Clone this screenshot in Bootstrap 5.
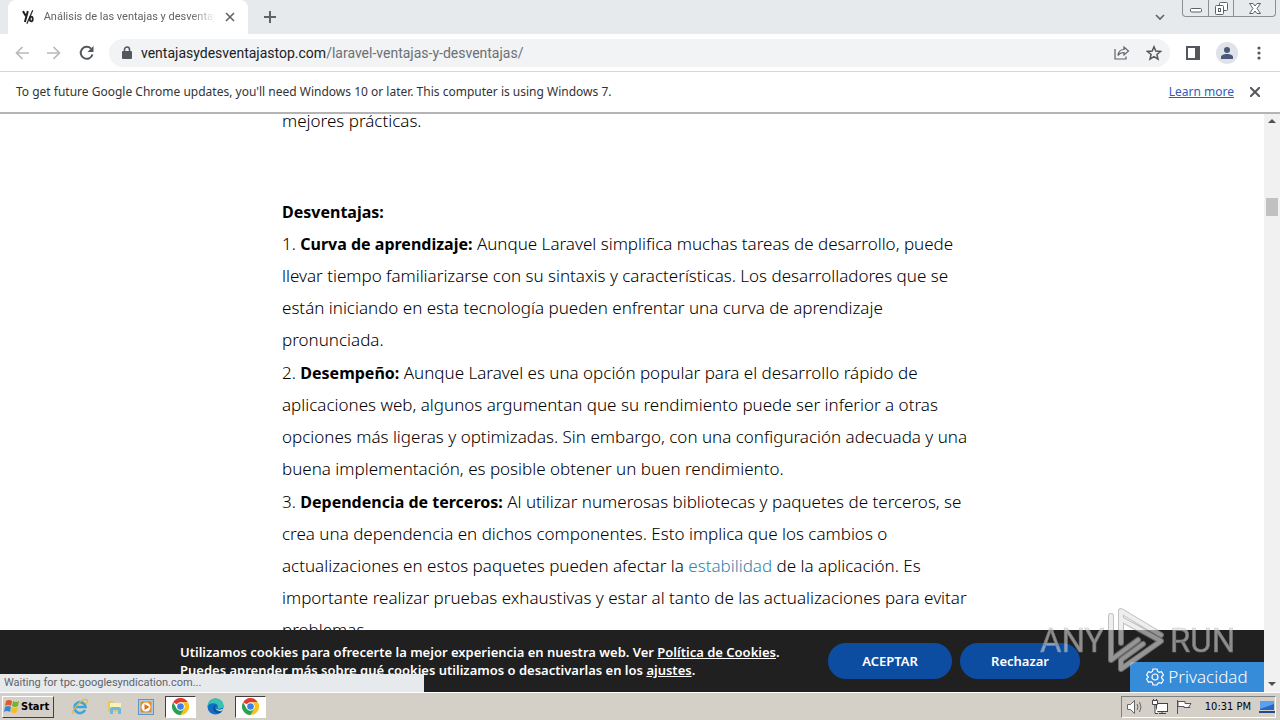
<!DOCTYPE html>
<html lang="es">
<head>
<meta charset="utf-8">
<meta name="viewport" content="width=device-width, initial-scale=1">
<title>Análisis de las ventajas y desventajas</title>
<link href="https://cdn.jsdelivr.net/npm/bootstrap@5.3.0/dist/css/bootstrap.min.css" rel="stylesheet">
<style>
  body { font-family: "DejaVu Sans Condensed", "DejaVu Sans", sans-serif; font-size: 12px; line-height: 16px; color: #333; background: #fff; }
  button, input { font: inherit; color: inherit; }
  .plain { border: 0; background: none; padding: 0; display: flex; }
  .strip { background: #e7eaed; height: 34px; }
  .tab { background: #fff; width: 240px; height: 34px; border-radius: 8px 8px 0 0; margin-left: 8px; font-family: Roboto, sans-serif; font-size: 11px; color: #5f6368; }
  .tab-title { overflow: hidden; width: 176px; -webkit-mask-image: linear-gradient(90deg, #000 85%, transparent); mask-image: linear-gradient(90deg, #000 85%, transparent); }
  .wincontrols { height: 17px; border: 1px solid #8b8f94; border-top: 0; border-radius: 0 0 4px 4px; margin-right: 4px; }
  .wincontrols button { justify-content: center; align-items: center; width: 25px; }
  .wincontrols button + button { border-left: 1px solid #8b8f94; }
  .wincontrols button:last-child { width: 42px; }
  .toolbar { height: 38px; border-bottom: 1px solid #d5d8db; padding-left: 15px; }
  .forward { margin: 0 18px; }
  .omnibox { background: #f1f3f4; height: 28px; border-radius: 14px; font-family: Roboto, sans-serif; font-size: 14px; margin-left: 14px; }
  .address { color: #202124; }
  .address span { color: #6b6f74; }
  .avatar { width: 22px; height: 22px; background: #dfe3e9; }
  .infobar { height: 42px; border-bottom: 2px solid #b4b4b4; font-family: "Noto Sans", sans-serif; }
  .infobar a { color: #2f5fb8; }
  .article { max-width: 700px; margin-top: -9px; font-family: "Noto Sans", sans-serif; font-weight: 300; font-size: 17px; line-height: 32px; color: #000; white-space: nowrap; }
  .article p { margin: 0 0 1px; }
  .article .lead-out { margin-bottom: 59px; }
  .article .heading { margin: 0; }
  .article b { font-weight: 700; font-size: 16px; }
  .article a { color: #2f83ad; text-decoration: none; }
  .scroller { width: 16px; background: #f1f1f1; }
  .thumb { height: 18px; width: 12px; background: #c1c1c1; margin-top: 74px; }
  .cookies { background: #202020; height: 62px; color: #fff; font-family: "Noto Sans", sans-serif; font-weight: 600; font-size: 13px; line-height: 18px; }
  .cookies-inner { max-width: 904px; }
  .cookies a { color: #fff; }
  .pill { background: #0c4da2; color: #fff; height: 36px; border: 0; border-radius: 18px; font-weight: 600; }
  .accept { width: 124px; }
  .reject { width: 120px; }
  .privacy { background: #368cd9; color: #fff; width: 134px; height: 30px; font-family: "Noto Sans", sans-serif; font-weight: 300; font-size: 17px; border-radius: 3px 0 0 0; }
  .status { background: #e7eaed; color: #5f6368; width: 424px; height: 18px; font-family: Roboto, sans-serif; font-size: 11px; }
  .watermark { right: 32px; bottom: 18px; pointer-events: none; opacity: .6; }
  .taskbar { height: 28px; background: #d4d0c8; border-top: 1px solid #fff; color: #000; font-size: 11px; }
  .raised { background: #d4d0c8; border: 1px solid; border-color: #fff #404040 #404040 #fff; height: 22px; width: 52px; font-weight: 700; margin: 0 10px 0 2px; }
  .task { width: 31px; height: 22px; justify-content: center; align-items: center; }
  .task.open { background: #fff; border: 1px solid; border-color: #404040 #fff #fff #404040; }
  .tray { border: 1px solid; border-color: #808080 #fff #fff #808080; height: 22px; }
</style>
</head>
<body class="vh-100 d-flex flex-column overflow-hidden">
<header>
  <div class="strip d-flex">
    <div class="tab d-flex align-items-center px-2">
      <svg class="ms-1 me-2" width="16" height="16" viewBox="0 0 16 16" fill="none" stroke="#222"><path d="M3 2l3 5M8 2L5 13" stroke-width="2"/><path d="M13 1L7 15" stroke-width="1.2"/><ellipse cx="11.500" cy="10" rx="1.500" ry="2.500" stroke-width="1.800"/></svg>
      <div class="tab-title text-nowrap">Análisis de las ventajas y desventajas</div>
      <button class="plain mx-1 ps-1" aria-label="Cerrar pestaña"><svg width="12" height="12" viewBox="0 0 12 12" stroke="#5f6368" stroke-width="1.6"><path d="M2 2l8 8M10 2l-8 8"/></svg></button>
    </div>
    <button class="plain align-items-center ms-3" aria-label="Nueva pestaña"><svg width="12" height="12" viewBox="0 0 12 12" stroke="#5f6368" stroke-width="2"><path d="M6 0v12M0 6h12"/></svg></button>
    <button class="plain align-items-center ms-auto me-3" aria-label="Buscar pestañas"><svg width="12" height="8" viewBox="0 0 12 8" fill="none" stroke="#5f6368" stroke-width="1.600"><path d="M2 2l4 4 4-4"/></svg></button>
    <div class="wincontrols d-flex">
      <button class="plain" aria-label="Minimizar"><svg class="mt-1" width="12" height="6" viewBox="0 0 12 6" fill="#fff" stroke="#5d6166"><rect x=".5" y="1.500" width="11" height="3.500" rx="1"/></svg></button>
      <button class="plain" aria-label="Restaurar"><svg width="13" height="13" viewBox="0 0 13 13" fill="#fff" stroke="#5d6166"><rect x="4.500" y=".5" width="8" height="8" rx="1"/><rect x=".5" y="3.500" width="8" height="9" rx="1"/><rect x="3.500" y="6.500" width="2" height="3"/></svg></button>
      <button class="plain" aria-label="Cerrar"><svg width="12" height="11" viewBox="0 0 12 11" fill="#fff" stroke="#5d6166"><path d="M.5.500h3.500l2 2.500 2-2.500h3.500l-3.500 5 3.500 5H8L6 8l-2 2.500H.5l3.500-5z"/></svg></button>
    </div>
  </div>
  <div class="toolbar d-flex align-items-center">
    <button class="plain" aria-label="Atrás"><svg width="14" height="14" viewBox="0 0 14 14" fill="none" stroke="#b7babd" stroke-width="1.700"><path d="M14 7H1.500M7.500 1l-6 6 6 6"/></svg></button>
    <button class="plain forward" aria-label="Adelante"><svg width="14" height="14" viewBox="0 0 14 14" fill="none" stroke="#b7babd" stroke-width="1.700"><path d="M0 7h12.500M6.500 1l6 6-6 6"/></svg></button>
    <button class="plain" aria-label="Recargar"><svg width="16" height="16" viewBox="0 0 16 16" fill="none" stroke="#54585c" stroke-width="2"><path d="M13.500 9.500A6 6 0 1 1 12 3.600"/><path d="M14.500 1v6h-6z" fill="#54585c" stroke="none"/></svg></button>
    <div class="omnibox d-flex align-items-center flex-grow-1 ps-2 pe-2">
      <svg class="ms-1 me-2" width="12" height="14" viewBox="0 0 12 14"><rect x="1" y="5" width="10" height="8" rx="1" fill="#54585c"/><path d="M3.500 6V3.500a2.500 2.500 0 0 1 5 0V6" fill="none" stroke="#54585c" stroke-width="1.500"/></svg>
      <div class="address flex-grow-1">ventajasydesventajastop.com<span>/laravel-ventajas-y-desventajas/</span></div>
      <button class="plain me-3" aria-label="Compartir"><svg width="16" height="15" viewBox="0 0 16 15" fill="none" stroke="#5f6368" stroke-width="1.200"><path d="M1 4v10h11v-2.500M4 10.500c.5-4 2.500-6 6-6V2l4.500 4-4.500 4V7.500c-3 0-4.500.8-6 3z"/></svg></button>
      <button class="plain" aria-label="Favoritos"><svg width="16" height="16" viewBox="0 0 16 16" fill="none" stroke="#54585c" stroke-width="1.500"><path d="M8 1.800l1.800 4.300 4.700.4-3.600 3 1.100 4.700-4-2.500-4 2.500 1.100-4.700-3.600-3 4.700-.4z"/></svg></button>
    </div>
    <button class="plain ms-3" aria-label="Panel lateral"><svg width="14" height="14" viewBox="0 0 14 14"><path d="M0 0h14v14H0zM2 2v10h7V2z" fill="#54585c" fill-rule="evenodd"/></svg></button>
    <button class="plain avatar rounded-circle align-items-center justify-content-center mx-3" aria-label="Perfil"><svg width="12" height="12" viewBox="0 0 12 12" fill="#4a5878"><circle cx="6" cy="3" r="3"/><path d="M0 12V10c0-2 3-3 6-3s6 1 6 3v2z"/></svg></button>
    <button class="plain me-3" aria-label="Menú"><svg width="10" height="14" viewBox="0 0 10 14" fill="#54585c"><circle cx="5" cy="2" r="1.600"/><circle cx="5" cy="7" r="1.600"/><circle cx="5" cy="12" r="1.600"/></svg></button>
  </div>
  <div class="infobar d-flex align-items-center px-3">
    <span>To get future Google Chrome updates, you'll need Windows 10 or later. This computer is using Windows 7.</span>
    <a class="ms-auto me-3" href="#">Learn more</a>
    <button class="plain me-1" aria-label="Cerrar aviso"><svg width="10" height="10" viewBox="0 0 10 10" stroke="#54585c" stroke-width="2"><path d="M0 0l10 10M10 0L0 10"/></svg></button>
  </div>
</header>

<div class="d-flex flex-grow-1 position-relative overflow-hidden">
  <main class="flex-grow-1 overflow-hidden position-relative">
    <article class="article mx-auto">
      <p class="lead-out">mejores prácticas.</p>
      <p class="heading"><b>Desventajas:</b></p>
      <p>1. <b>Curva de aprendizaje:</b> Aunque Laravel simplifica muchas tareas de desarrollo, puede<br>
      llevar tiempo familiarizarse con su sintaxis y características. Los desarrolladores que se<br>
      están iniciando en esta tecnología pueden enfrentar una curva de aprendizaje<br>
      pronunciada.</p>
      <p>2. <b>Desempeño:</b> Aunque Laravel es una opción popular para el desarrollo rápido de<br>
      aplicaciones web, algunos argumentan que su rendimiento puede ser inferior a otras<br>
      opciones más ligeras y optimizadas. Sin embargo, con una configuración adecuada y una<br>
      buena implementación, es posible obtener un buen rendimiento.</p>
      <p>3. <b>Dependencia de terceros:</b> Al utilizar numerosas bibliotecas y paquetes de terceros, se<br>
      crea una dependencia en dichos componentes. Esto implica que los cambios o<br>
      actualizaciones en estos paquetes pueden afectar la <a href="#">estabilidad</a> de la aplicación. Es<br>
      importante realizar pruebas exhaustivas y estar al tanto de las actualizaciones para evitar<br>
      problemas.</p>
    </article>
    <section class="cookies position-absolute bottom-0 start-0 w-100">
      <div class="cookies-inner mx-auto h-100 d-flex align-items-center gap-2 pe-1">
        <div class="flex-grow-1 text-nowrap">Utilizamos cookies para ofrecerte la mejor experiencia en nuestra web. Ver <a href="#">Política de Cookies</a>.<br>Puedes aprender más sobre qué cookies utilizamos o desactivarlas en los <a href="#">ajustes</a>.</div>
        <button class="pill accept">ACEPTAR</button>
        <button class="pill reject">Rechazar</button>
      </div>
    </section>
    <button class="plain privacy position-absolute bottom-0 end-0 align-items-center justify-content-center gap-1">
      <svg width="18" height="18" viewBox="0 0 18 18" fill="none" stroke="#fff" stroke-width="1.200"><path d="M7 1h4l.6 2.400 1.500.9 2.400-.7 2 3.400-1.800 1.700v1.600l1.800 1.700-2 3.400-2.400-.7-1.500.9L11 17H7l-.6-2.400-1.500-.9-2.400.7-2-3.400 1.800-1.700V8.700L.5 7l2-3.400 2.400.7 1.500-.9z"/><circle cx="9" cy="9" r="3"/></svg>
      <span>Privacidad</span>
    </button>
    <div class="status position-absolute bottom-0 start-0 px-1 d-flex align-items-center">Waiting for tpc.googlesyndication.com...</div>
  </main>
  <div class="scroller d-flex flex-column align-items-center pb-1">
    <svg class="mt-1" width="8" height="6" viewBox="0 0 8 6"><path d="M0 5l4-4 4 4z" fill="#505050"/></svg>
    <div class="thumb"></div>
    <svg class="mt-auto" width="8" height="6" viewBox="0 0 8 6"><path d="M0 0h8L4 4z" fill="#505050"/></svg>
  </div>
  <svg class="watermark position-absolute" width="210" height="68" viewBox="0 0 210 68" aria-hidden="true">
    <g fill="#d8d8d8" font-family="Roboto, sans-serif" font-size="33" stroke="#aaa" stroke-width=".6">
      <text x="2" y="46">ANY</text><text x="132" y="46">RUN</text>
    </g>
    <g fill="none" stroke-linejoin="round" stroke-linecap="round">
      <path d="M73 10v44l27-20M83 37V5l40 24M83 63l40-28L83 13M83 63v-9l22-16" stroke="#999" stroke-width="6"/>
      <path d="M73 10v44l27-20M83 37V5l40 24M83 63l40-28L83 13M83 63v-9l22-16" stroke="#e4e4e4" stroke-width="4"/>
    </g>
  </svg>
</div>

<footer class="taskbar d-flex align-items-center">
  <button class="raised d-flex align-items-center p-0">
    <svg width="18" height="16" viewBox="0 0 18 16"><path d="M3 2q3-2 6 0L8 7Q5 5 2 7z" fill="#e2582a"/><path d="M10 2q3 2 6 0l-1 5q-3 2-6 0z" fill="#77b32e"/><path d="M2 8q3-2 6 0l-1 5q-3-2-6 0z" fill="#3986d1"/><path d="M9 8q3 2 6 0l-1 5q-3 2-6 0z" fill="#f4bd24"/></svg>Start</button>
  <button class="plain task" aria-label="Internet Explorer"><svg width="18" height="18" viewBox="0 0 18 18" fill="none"><path d="M14 12a5.500 5.500 0 1 1 .5-3H5" stroke="#3aa5e0" stroke-width="2.600"/><path d="M3 16C-2 14 12-1 16 2q1 1-1 4" stroke="#e6b93a" stroke-width="1.300"/></svg></button>
  <button class="plain task ms-1" aria-label="Explorador de archivos"><svg width="18" height="18" viewBox="0 0 18 18"><path d="M2 3h5l1 2h7v9H2z" fill="#e8c565"/><path d="M4 5h11v5H4z" fill="#fbf0b5"/><path d="M4 16v-5q0-2 2-2h7q2 0 2 2v5h-3v-4H7v4z" fill="#70b7dc"/></svg></button>
  <button class="plain task" aria-label="Reproductor"><svg width="16" height="16" viewBox="0 0 16 16"><rect x=".5" y=".5" width="15" height="15" fill="#a9cde8" stroke="#5c95c6"/><rect x="2.500" y="2.500" width="11" height="11" rx="1" fill="#ee8a1d"/><circle cx="8" cy="8" r="4.500" fill="#fff"/><path d="M6.500 5l5 3-5 3z" fill="#e06c10"/></svg></button>
  <button class="plain task open ms-1" aria-label="Chrome"><svg width="17" height="17" viewBox="0 0 18 18"><path d="M9 9L1.200 4.500A9 9 0 0 1 16.800 4.500H9z" fill="#e33b2e"/><path d="M16.800 4.500A9 9 0 0 1 9 18l3.900-6.700L9 4.500z" fill="#fbc116"/><path d="M1.200 4.500A9 9 0 0 0 9 18l4-6.700H5z" fill="#2aa14c"/><circle cx="9" cy="9" r="4.500" fill="#fff"/><circle cx="9" cy="9" r="3.500" fill="#3f7fe8"/></svg></button>
  <button class="plain task ms-1" aria-label="Edge"><svg width="17" height="17" viewBox="0 0 18 18"><circle cx="9" cy="9" r="8.500" fill="#1170c4"/><path d="M.5 9C1 3.500 5 .5 9 .5c5 0 8.500 3.500 8.500 7 0 3-2 4-4 4s-3-1-2-2c0-3-2-4-5-4S1 7 .5 9z" fill="#37c3b0"/><path d="M9 7c-4 2-3 8 2 9 3 0 4-1 5-2-5 1-8-1-7-5z" fill="#0b4f9e"/><path d="M9 8q-1 4 4 4.500l5-1-3 2.500q-7 0-6-6z" fill="#d4d0c8"/></svg></button>
  <button class="plain task open ms-1" aria-label="Chrome, ventana activa"><svg width="17" height="17" viewBox="0 0 18 18"><path d="M9 9L1.200 4.500A9 9 0 0 1 16.800 4.500H9z" fill="#e33b2e"/><path d="M16.800 4.500A9 9 0 0 1 9 18l3.900-6.700L9 4.500z" fill="#fbc116"/><path d="M1.200 4.500A9 9 0 0 0 9 18l4-6.700H5z" fill="#2aa14c"/><circle cx="9" cy="9" r="4.500" fill="#fff"/><circle cx="9" cy="9" r="3.500" fill="#3f7fe8"/></svg></button>
  <div class="tray d-flex align-items-center ms-auto me-1 ps-1 gap-2">
    <svg width="18" height="16" viewBox="0 0 18 16" fill="#fff" stroke="#666"><path d="M1.500 5.500h3l4-4v13l-4-4h-3z"/><path d="M11 5q2 3 0 6M13.500 3q3 5 0 10" fill="none"/></svg>
    <svg width="16" height="16" viewBox="0 0 16 16" fill="#fff" stroke="#444"><rect x="4.500" y="4.500" width="11" height="8"/><path d="M7 14.500h7M10 12.500v2M3 6v8.500h3"/><path d="M.5 1.500h5v4h-5zM1.500 0v2M4.500 0v2"/></svg>
    <svg width="17" height="16" viewBox="0 0 17 16" fill="#fff" stroke="#555"><path d="M1.500 1v14"/><path d="M2 2.500h7v2h6l-2 3 1 1H8v-1H2z"/></svg>
    <span class="ms-1">10:31 PM</span>
    <svg width="16" height="14" viewBox="0 0 16 14"><path d="M1 1h14v9H1z" fill="#2368c9"/><path d="M1 1h14v3L1 9z" fill="#5aa0ec"/><path d="M0 11h16v2H0z" fill="#234a86"/></svg>
  </div>
</footer>
<script src="https://cdn.jsdelivr.net/npm/bootstrap@5.3.0/dist/js/bootstrap.bundle.min.js"></script>
</body>
</html>
